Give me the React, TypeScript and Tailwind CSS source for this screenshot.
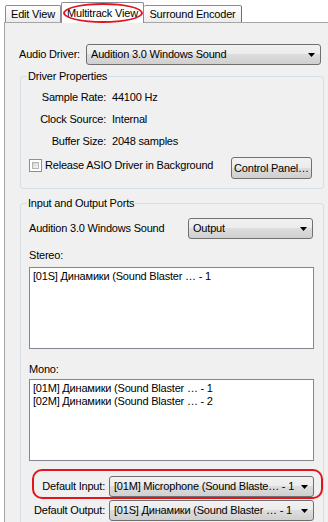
import React from "react";

const btnBg =
  "bg-[linear-gradient(#f2f2f2_0%,#ebebeb_50%,#dddddd_50%,#cfcfcf_100%)]";

const Arrow: React.FC = () => (
  <svg width="7" height="4" viewBox="0 0 7 4" className="shrink-0 ml-[4px]">
    <polygon points="0,0 7,0 3.5,4" fill="#000" />
  </svg>
);

const Dropdown: React.FC<{ text: string; className: string }> = ({ text, className }) => (
  <div
    className={`flex items-center border border-[#707070] rounded-[3px] ${btnBg} pl-[4px] pr-[5px] ${className}`}
  >
    <span className="flex-1 whitespace-nowrap overflow-hidden">{text}</span>
    <Arrow />
  </div>
);

const ListBox: React.FC<{ items: string[] }> = ({ items }) => (
  <div className="ml-[8px] w-[285px] h-[82px] border border-[#828790] bg-white pl-[3px] pt-[2px]">
    {items.map((item, i) => (
      <div key={i} className="whitespace-nowrap">
        {item}
      </div>
    ))}
  </div>
);

const Group: React.FC<{ title: string; className: string; children: React.ReactNode }> = ({
  title,
  className,
  children,
}) => (
  <fieldset
    className={`ml-[15px] w-[304px] border border-[#d5dfe5] rounded-[3px] ${className}`}
  >
    <legend className="ml-[6px] px-[1px]">{title}</legend>
    {children}
  </fieldset>
);

export default function App() {
  return (
    <div className="relative w-[328px] h-[522px] overflow-hidden bg-white text-black text-[11px] leading-[13px] tracking-[-0.2px] font-['Liberation_Sans',Arial,sans-serif]">
      {/* tabs */}
      <div className="relative z-10 flex items-end h-[22px] pl-[5px]">
        <div className="h-[17px] w-[56px] flex items-center justify-center border border-b-0 border-[#898c95] rounded-t-[2px] bg-gradient-to-b from-white to-[#ececec]">
          Edit View
        </div>
        <div className="relative -mb-px h-[21px] w-[83px] flex items-center justify-center border border-b-0 border-[#898c95] rounded-t-[2px] bg-white">
          Multitrack View
        </div>
        <div className="h-[17px] w-[98px] flex items-center justify-center border border-b-0 border-l-0 border-[#898c95] border-r-[#6b6e75] rounded-t-[2px] bg-gradient-to-b from-white to-[#ececec]">
          Surround Encoder
        </div>
      </div>

      {/* panel */}
      <div className="ml-[4px] h-[500px] border-t border-l border-[#a5a5a5] bg-[#f0f0f0]">
        <div className="mt-[21px] flex items-center h-[21px]">
          <span className="pl-[14px] w-[81px] whitespace-nowrap">Audio Driver:</span>
          <Dropdown text="Audition 3.0 Windows Sound" className="w-[235px] h-[21px]" />
        </div>

        <Group title="Driver Properties" className="mt-[5px] pt-[3px] pb-[9px]">
          <div className="grid grid-cols-[85px_1fr] gap-x-[6px] auto-rows-[22px] items-center">
            <span className="text-right">Sample Rate:</span>
            <span>44100 Hz</span>
            <span className="text-right">Clock Source:</span>
            <span>Internal</span>
            <span className="text-right">Buffer Size:</span>
            <span>2048 samples</span>
          </div>
          <div className="mt-[5px] flex items-start pl-[8px] pr-[11px]">
            <div className="mt-[2px] w-[13px] h-[13px] border border-[#8e8f8f] bg-white p-[2px]">
              <div className="w-full h-full border border-[#b4b4b4] bg-gradient-to-br from-[#d4d4d4] to-[#f7f7f7]" />
            </div>
            <span className="ml-[3px] mt-[2px]">Release ASIO Driver in Background</span>
            <div
              className={`ml-auto w-[81px] h-[22px] flex items-center justify-center border border-[#707070] rounded-[3px] ${btnBg}`}
            >
              Control Panel…
            </div>
          </div>
        </Group>

        <Group title="Input and Output Ports" className="mt-[8px] h-[400px] pt-[8px]">
          <div className="flex items-center h-[21px] pl-[8px] pr-[10px]">
            <span>Audition 3.0 Windows Sound</span>
            <Dropdown text="Output" className="ml-auto w-[125px] h-[21px]" />
          </div>
          <div className="mt-[10px] pl-[8px]">Stereo:</div>
          <div className="mt-[5px]">
            <ListBox items={["[01S] Динамики (Sound Blaster … - 1"]} />
          </div>
          <div className="mt-[14px] pl-[8px]">Mono:</div>
          <div className="mt-[3px]">
            <ListBox
              items={[
                "[01M] Динамики (Sound Blaster … - 1",
                "[02M] Динамики (Sound Blaster … - 2",
              ]}
            />
          </div>
          <div className="mt-[15px] grid grid-cols-[84px_205px] gap-x-[4px] gap-y-[3px] auto-rows-[21px] items-center">
            <span className="text-right whitespace-nowrap">Default Input:</span>
            <Dropdown text="[01M] Microphone (Sound Blaste… - 1" className="h-[21px]" />
            <span className="text-right whitespace-nowrap">Default Output:</span>
            <Dropdown text="[01S] Динамики (Sound Blaster … - 1" className="h-[21px]" />
          </div>
        </Group>
      </div>

      {/* red annotations */}
      <div className="absolute left-[63px] top-[3px] w-[80px] h-[20px] border-2 border-[#e3141c] rounded-[50%] z-20 pointer-events-none" />
      <div className="absolute left-[32px] top-[469px] w-[291px] h-[30px] border-2 border-[#e3141c] rounded-[10px] pointer-events-none" />
    </div>
  );
}
